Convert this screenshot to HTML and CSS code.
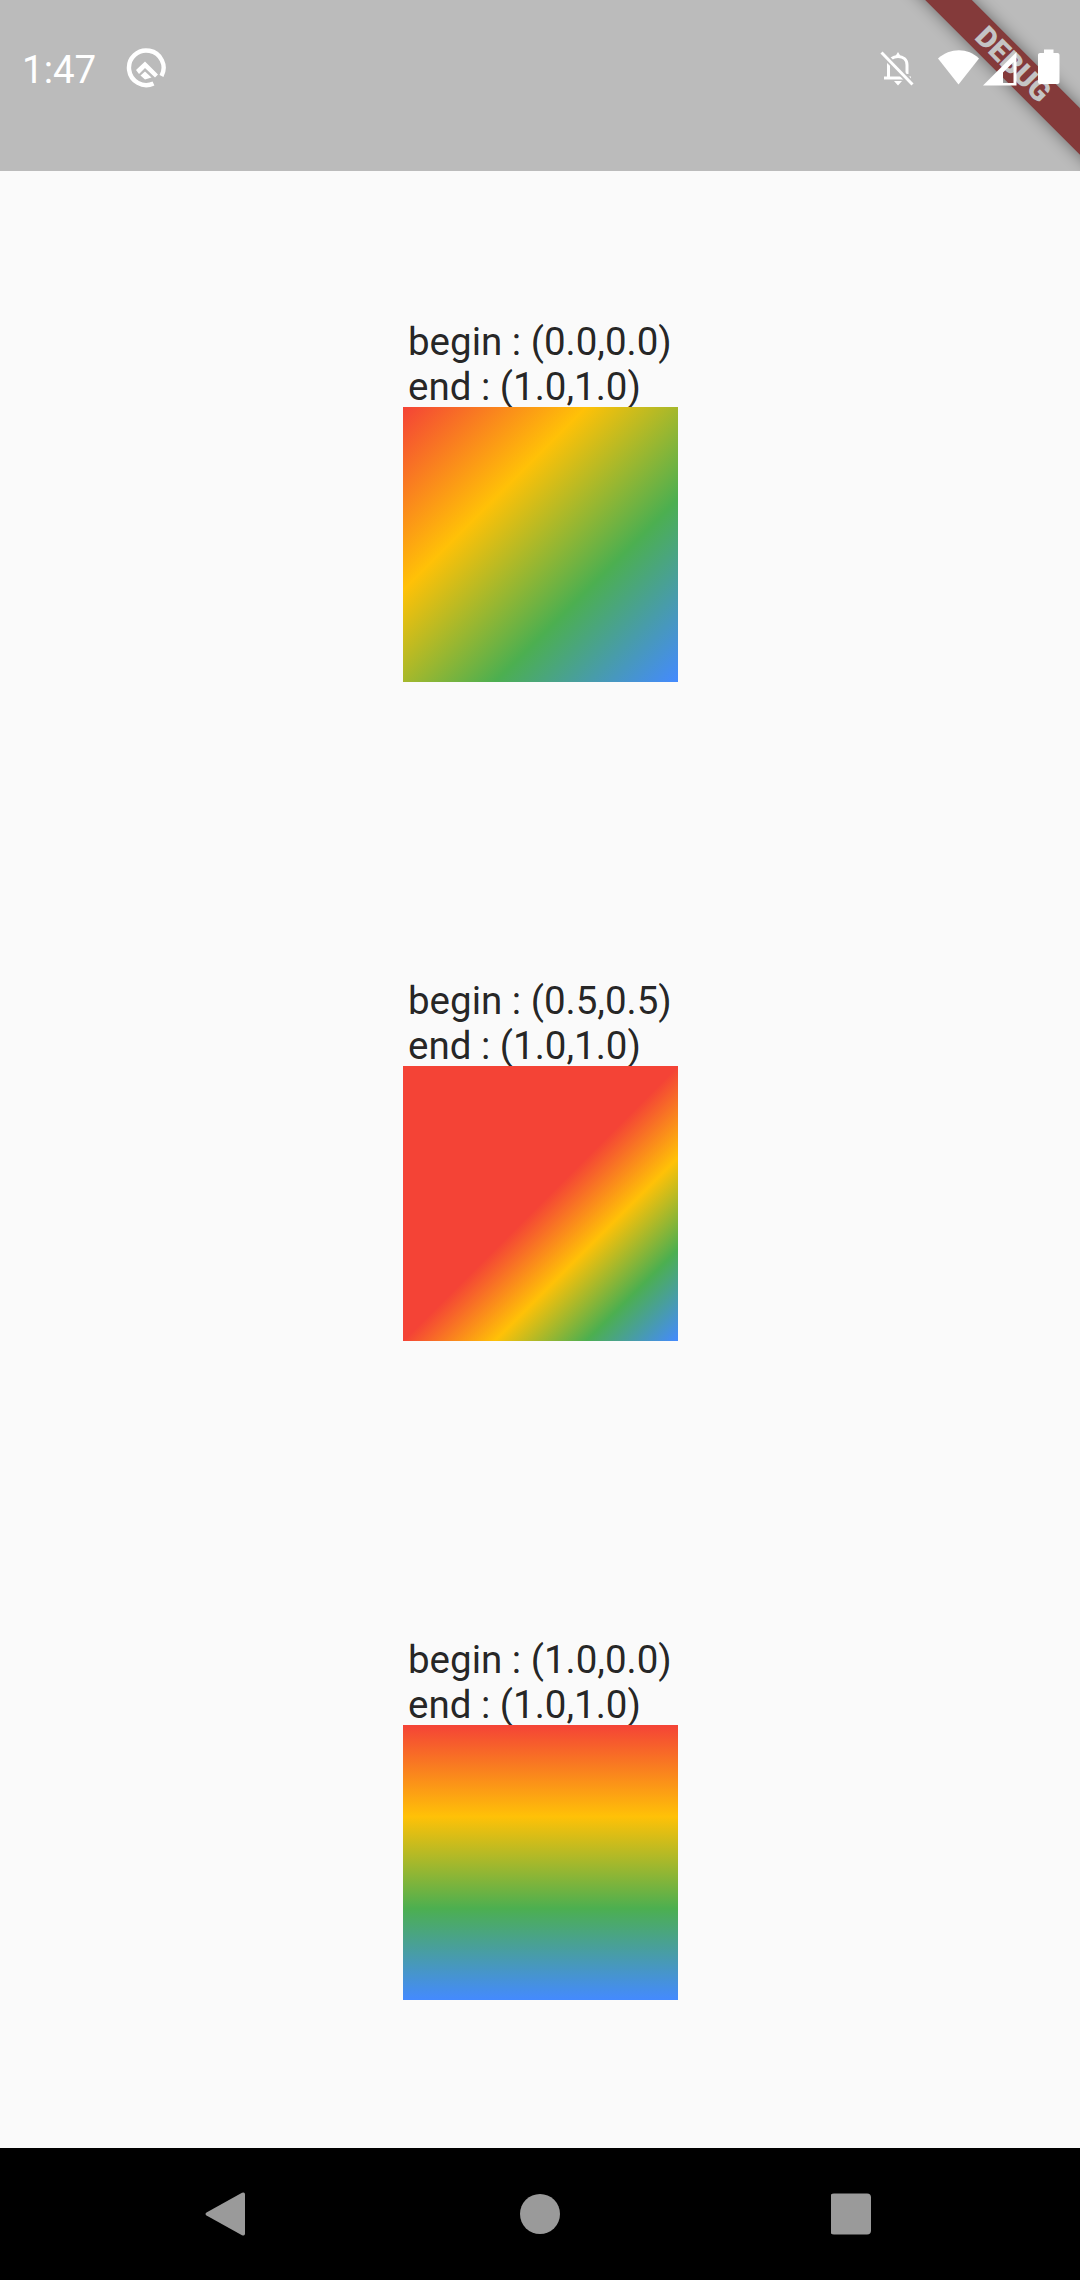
FILE: index.html
```html
<!DOCTYPE html>
<html lang="en">
<head>
  <meta charset="UTF-8">
  <title>Gradient alignment</title>
  <link rel="stylesheet" href="styles.css">
</head>
<body>

  <header class="status-bar">
    <div class="debug-banner">DEBUG</div>
    <span class="clock">1:47</span>
    <svg class="q-icon" width="40" height="40" viewBox="0 0 40 40">
      <path d="M27.500 35.500A17.300 17.300 0 1 1 35.500 28" fill="none" stroke="#fff" stroke-width="4.400"/>
      <path d="M10 22L19 13.500L32 26.500L29 29.500L19 20L13 26Z" fill="#fff"/>
      <path d="M14.500 27.500L19 23.500L25.500 29.500L19 31.500Z" fill="#fff"/>
    </svg>
    <div class="status-icons">
      <svg width="34" height="36" viewBox="0 0 34 36">
        <path d="M4 28H31M8.500 28V15C8.500 9.500 13 6.500 18 6.500S27 9.500 27 15V24" fill="none" stroke="#fff" stroke-width="3"/>
        <path d="M14 31H22L18 35.500Z M15.500 6L18 2L20.500 6Z" fill="#fff"/>
        <path d="M1.500 2.500L32.500 34.500" stroke="#bbb" stroke-width="6.500"/>
        <path d="M1.500 2.500L32.500 34.500" stroke="#fff" stroke-width="3"/>
      </svg>
      <svg class="wifi" width="42" height="35" viewBox="0 0 42 35">
        <path d="M0 8.500C12 -2.500 30 -2.500 41 8.500L20.500 34.500Z" fill="#fff"/>
      </svg>
      <svg class="signal" width="34" height="35" viewBox="0 0 34 35">
        <path fill-rule="evenodd" d="M0 34.500L33.500 1V34.500ZM20 32H30.500V11L20 21.500Z" fill="#fff"/>
      </svg>
      <svg class="battery" width="22" height="36" viewBox="0 0 22 36">
        <path d="M6 0.500H15.500V4H19.500C20.600 4 21.500 4.900 21.500 6V33C21.500 34.100 20.600 35 19.500 35H2C0.900 35 0 34.100 0 33V6C0 4.900 0.900 4 2 4H6Z" fill="#fff"/>
      </svg>
    </div>
  </header>

  <main class="samples">
    <section class="sample">
      <p class="sample-label">begin : (0.0,0.0)<br>end : (1.0,1.0)</p>
      <div class="swatch swatch-corner"></div>
    </section>
    <section class="sample">
      <p class="sample-label">begin : (0.5,0.5)<br>end : (1.0,1.0)</p>
      <div class="swatch swatch-center"></div>
    </section>
    <section class="sample">
      <p class="sample-label">begin : (1.0,0.0)<br>end : (1.0,1.0)</p>
      <div class="swatch swatch-edge"></div>
    </section>
  </main>

  <!-- tombol navigasi -->
  <nav class="nav-bar">
    <svg width="48" height="48" viewBox="0 0 48 48">
      <path d="M5.500 22.500L41 2.800Q44 1.500 44 4.500V43.500Q44 46.500 41 45.200L5.500 25.500Q3.500 24 5.500 22.500Z" fill="#9a9a9a"/>
    </svg>
    <svg width="48" height="48" viewBox="0 0 48 48">
      <circle cx="24" cy="24" r="20" fill="#9a9a9a"/>
    </svg>
    <svg width="48" height="48" viewBox="0 0 48 48">
      <rect x="-1" y="3.500" width="41" height="41" rx="4" fill="#9a9a9a"/>
    </svg>
  </nav>

</body>
</html>
```

FILE: styles.css
```css
body {
  margin: 0;
  height: 2280px;
  display: flex;
  flex-direction: column;
  font-family: Roboto, sans-serif;
  background-color: #fafafa;
  overflow: hidden;
}

.status-bar {
  position: relative;
  height: 171px;
  flex-shrink: 0;
  display: flex;
  align-items: flex-start;
  background-color: #bbbbbb;
  color: white;
  overflow: hidden;
}

.debug-banner {
  position: absolute;
  left: 863px;
  top: 48px;
  width: 300px;
  height: 33px;
  line-height: 33px;
  text-align: center;
  font-size: 29px;
  font-weight: 900;
  color: #c4c4c4;
  background-color: #843a3a;
  box-shadow: 0 0 16px rgba(0,0,0,0.45);
  transform: rotate(45deg);
}

.clock {
  position: relative;
  margin: 47px 0 0 22px;
  font-size: 38.5px;
  line-height: 45px;
}

.q-icon {
  position: relative;
  margin: 48px 0 0 30px;
}

.status-icons {
  position: absolute;
  top: 50px;
  left: 880px;
  display: flex;
  align-items: flex-start;
}

.wifi {
  margin-left: 24px;
}

.signal {
  margin: 1px 0 0 3px;
}

.battery {
  margin: -1px 0 0 21px;
}

.samples {
  flex: 1;
  display: flex;
  flex-direction: column;
}

.sample {
  flex: 1;
  display: flex;
  flex-direction: column;
  justify-content: center;
  align-items: center;
}

.sample-label {
  width: 275px;
  box-sizing: border-box;
  margin: 0 0 -2px;
  padding-left: 5.5px;
  font-size: 38.5px;
  line-height: 45px;
  white-space: nowrap;
  color: rgba(0,0,0,0.87);
}

/* kotak menutupi bagian bawah teks */
.swatch {
  position: relative;
  width: 275px;
  height: 275px;
}

.swatch-corner {
  background: linear-gradient(135deg, #f44336, #ffc107 33.3%, #4caf50 66.7%, #448aff);
}

.swatch-center {
  background: linear-gradient(135deg, #f44336 50%, #ffc107 66.7%, #4caf50 83.3%, #448aff);
}

.swatch-edge {
  background: linear-gradient(180deg, #f44336, #ffc107 33.3%, #4caf50 66.7%, #448aff);
}

.nav-bar {
  height: 132px;
  flex-shrink: 0;
  display: flex;
  justify-content: center;
  align-items: center;
  gap: 267px;
  background-color: black;
}
```
